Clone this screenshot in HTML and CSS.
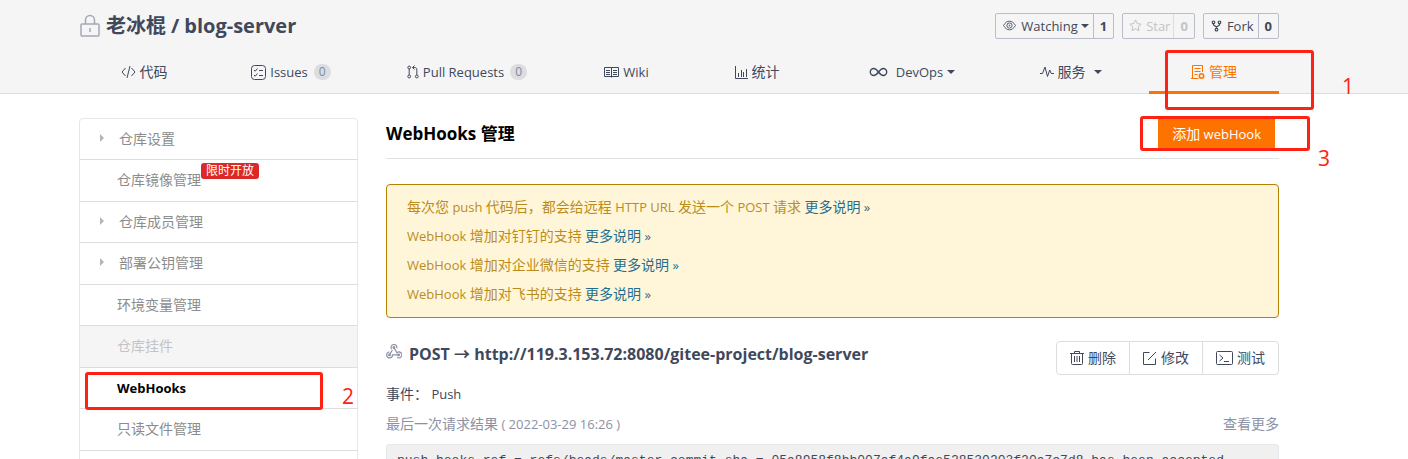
FILE: index.html
```
<!DOCTYPE html>
<html lang="zh-CN">
<head>
  <meta charset="utf-8">
  <title>WebHooks 管理</title>
  <link rel="stylesheet" href="styles.css">
</head>
<body>

<header class="project-header">
  <div class="container">
    <div class="title-row">
      <h1 class="project-title">
        <svg class="lock" width="22" height="24" viewBox="0 0 22 24" fill="none" stroke="#a3a8b8" stroke-width="1.5"><rect x="2" y="10" width="18" height="12" rx="1"/><path d="M6.500 10V6a4.500 4.500 0 0 1 9 0v4M11 14v4"/></svg>
        <a href="#">老冰棍</a> <span>/</span> <a href="#">blog-server</a>
      </h1>
      <div class="actions">
        <div class="action">
          <button class="action-main">
            <svg width="13" height="11" viewBox="0 0 13 11" fill="none" stroke="#596072"><path d="M.5 5.500C2.500 2.300 4.300 1.200 6.500 1.200s4 1.100 6 4.300c-2 3.200-3.800 4.300-6 4.300S2.500 8.700.5 5.500z"/><circle cx="6.500" cy="5.500" r="2.600"/><circle cx="6.500" cy="5.500" r=".5"/></svg>
            <span>Watching</span><i class="caret"></i>
          </button>
          <a class="action-count" href="#">1</a>
        </div>
        <div class="action disabled">
          <button class="action-main" disabled>
            <svg width="13" height="13" viewBox="0 0 13 13" fill="none" stroke="#c3c3c7"><path d="M6.500 1l1.700 3.600 3.900.5-2.900 2.700.8 3.900-3.500-1.900L3 11.700l.8-3.900L.9 5.100l3.900-.5z"/></svg>
            <span>Star</span>
          </button>
          <a class="action-count" href="#">0</a>
        </div>
        <div class="action">
          <button class="action-main">
            <svg width="11" height="12" viewBox="0 0 11 12" fill="none" stroke="#40485b" stroke-width="1.200"><circle cx="2.500" cy="2.300" r="1.300"/><circle cx="8.500" cy="2.300" r="1.300"/><circle cx="5.500" cy="9.700" r="1.300"/><path d="M2.500 3.600V5l3 2 3-2V3.600M5.500 7v1.400"/></svg>
            <span>Fork</span>
          </button>
          <a class="action-count" href="#">0</a>
        </div>
      </div>
    </div>

    <nav class="tabs">
      <a class="tab" href="#">
        <svg width="15" height="14" viewBox="0 0 15 14" fill="none" stroke="#40485b"><path d="M4.500 3L1 7l3.500 4M10.500 3L14 7l-3.500 4M9 1L6 13"/></svg>
        <span class="cjk">代码</span>
      </a>
      <a class="tab" href="#">
        <svg width="15" height="15" viewBox="0 0 15 15" fill="none" stroke="#40485b"><rect x=".5" y=".5" width="14" height="14" rx="3"/><path d="M3 5l1.200 1.200L6.500 3.500M3 10l1.200 1.200L6.500 8.500M8 5.500h4M8 10.500h4"/></svg>
        Issues <span class="badge">0</span>
      </a>
      <a class="tab" href="#">
        <svg width="12" height="14" viewBox="0 0 12 14" fill="none" stroke="#40485b"><circle cx="2.200" cy="2.500" r="1.400"/><circle cx="2.200" cy="11.500" r="1.400"/><circle cx="9.800" cy="11.500" r="1.400"/><path d="M2.200 4v6M9.800 10V4.500c0-1.300-.7-2-2-2H5.500M7.500.5l-2 2 2 2"/></svg>
        Pull Requests <span class="badge">0</span>
      </a>
      <a class="tab" href="#">
        <svg width="15" height="12" viewBox="0 0 15 12" fill="none" stroke="#40485b"><path d="M.5 1.500h14v9H.5zM7.500 1.500v10M2 4.500h4M2 6.500h4M2 8.500h4M9 4.500h4M9 6.500h4M9 8.500h4"/></svg>
        Wiki
      </a>
      <a class="tab" href="#">
        <svg width="13" height="13" viewBox="0 0 13 13" fill="none" stroke="#40485b"><path d="M.5 0v12.500H13M3.500 11V7M6.500 11V4M8.500 11V6M11.500 11V3"/></svg>
        <span class="cjk">统计</span>
      </a>
      <a class="tab" href="#">
        <svg width="19" height="10" viewBox="0 0 19 10" fill="none" stroke="#40485b" stroke-width="1.400"><path d="M9.500 5C8 3 6.800 1.500 4.800 1.500a3.500 3.500 0 0 0 0 7C6.800 8.500 8 7 9.500 5s2.700-3.500 4.700-3.500a3.500 3.500 0 0 1 0 7C12.200 8.500 11 7 9.500 5z"/></svg>
        <span class="devops">DevOps</span><i class="caret"></i>
      </a>
      <a class="tab" href="#">
        <svg width="14" height="12" viewBox="0 0 14 12" fill="none" stroke="#40485b"><path d="M0 7.500h2.500L5 1l2.500 9.500L9.700 4l1.500 3.500H14"/></svg>
        <span class="cjk">服务</span><i class="caret wide"></i>
      </a>
      <a class="tab active" href="#">
        <svg width="14" height="15" viewBox="0 0 14 15" fill="none" stroke="#fe7300"><path d="M7.500 13.500h-6V.5h10V7M0 13.500h7M3.500 3.500h6M3.500 6.500h6M3.500 9.500h3"/><circle cx="10.500" cy="11" r="2.200" stroke-width="1.500"/></svg>
        <span class="cjk">管理</span>
      </a>
    </nav>
  </div>
</header>

<div class="container page">
  <aside class="sidebar">
    <a class="menu-item parent" href="#">仓库设置</a>
    <a class="menu-item" href="#">仓库镜像管理<span class="hot">限时开放</span></a>
    <a class="menu-item parent" href="#">仓库成员管理</a>
    <a class="menu-item parent" href="#">部署公钥管理</a>
    <a class="menu-item" href="#">环境变量管理</a>
    <a class="menu-item muted" href="#">仓库挂件</a>
    <a class="menu-item current" href="#">WebHooks</a>
    <a class="menu-item" href="#">只读文件管理</a>
  </aside>

  <main class="content">
    <div class="content-head">
      <h2>WebHooks 管理</h2>
      <button class="add-btn"><span class="cjk">添加</span> webHook</button>
    </div>

    <div class="notice">
      <p><span class="cjk">每次您</span> push <span class="cjk">代码后，都会给远程</span> HTTP URL <span class="cjk">发送一个</span> POST <span class="cjk">请求</span> <a href="#"><span class="cjk">更多说明</span> »</a></p>
      <p>WebHook <span class="cjk">增加对钉钉的支持</span> <a href="#"><span class="cjk">更多说明</span> »</a></p>
      <p>WebHook <span class="cjk">增加对企业微信的支持</span> <a href="#"><span class="cjk">更多说明</span> »</a></p>
      <p>WebHook <span class="cjk">增加对飞书的支持</span> <a href="#"><span class="cjk">更多说明</span> »</a></p>
    </div>

    <section class="hook">
      <div class="hook-head">
        <h3>
          <svg width="16" height="15" viewBox="0 0 16 15" fill="none" stroke="#8c92a4" stroke-width="1.200"><path d="M5.700 5.200A2.900 2.900 0 1 1 10.700 4.300M7.900 3.500l3 5.300a2.900 2.900 0 1 1 .2 4.300M12.700 10.900H6.500a2.900 2.900 0 1 1-3-2.900M3.500 10.900L6.400 6"/><circle cx="7.900" cy="3.500" r=".8"/><circle cx="3.500" cy="10.900" r=".8"/><circle cx="12.700" cy="10.900" r=".8"/></svg>
          <span>POST → http://119.3.153.72:8080/gitee-project/blog-server</span>
        </h3>
        <div class="btn-group">
          <button>
            <svg width="14" height="14" viewBox="0 0 14 14" fill="none" stroke="#40485b"><path d="M0 2.500h14M4.500 2V.5h5V2M1.500 2.500v10q0 1 1 1h9q1 0 1-1v-10M4.500 5v6M7 5v6M9.500 5v6"/></svg>
            删除
          </button>
          <button>
            <svg width="14" height="14" viewBox="0 0 14 14" fill="none" stroke="#40485b"><path d="M6.500 1.500h-6v12h12v-6M5 9l8-8"/></svg>
            修改
          </button>
          <button>
            <svg width="17" height="14" viewBox="0 0 17 14" fill="none" stroke="#40485b"><rect x=".5" y=".5" width="16" height="13" rx="1"/><path d="M3.500 4l3.500 3-3.500 3M8 10.500h5"/></svg>
            测试
          </button>
        </div>
      </div>
      <p class="events"><span class="cjk">事件：</span> Push</p>
      <div class="last-result">
        <span><span class="cjk">最后一次请求结果</span> ( 2022-03-29 16:26 )</span>
        <a href="#">查看更多</a>
      </div>
      <pre class="result">push_hooks ref = refs/heads/master commit_sha = 05a8958f8bb007af4a9fae528530203f20a7c7d8 has been accepted</pre>
    </section>
  </main>
</div>

<!-- step marks -->
<div class="mark mark-tab"></div>
<div class="mark mark-menu"></div>
<div class="mark mark-add"></div>
<span class="step step-1">1</span>
<span class="step step-2">2</span>
<span class="step step-3">3</span>

</body>
</html>
```

FILE: styles.css
```
* {
  box-sizing: border-box;
}

body {
  margin: 0;
  font-family: "Open Sans", "Noto Sans CJK SC", sans-serif;
  font-size: 13px;
  line-height: 20px;
  color: #40485b;
  background: #fff;
}

a {
  color: inherit;
  text-decoration: none;
}

button {
  font: inherit;
  color: inherit;
  cursor: pointer;
}

h1, h2, h3, p {
  margin: 0;
}

svg {
  flex: none;
}

.cjk {
  font-size: 14px;
  line-height: 1;
}

.container {
  max-width: 1250px;
  margin: 0 auto;
  padding-right: 50px;
}

.project-header {
  background: #f5f5f5;
  border-bottom: 1px solid #dcdddf;
}

.title-row {
  display: flex;
  justify-content: space-between;
  align-items: center;
  height: 51px;
}

.project-title {
  display: flex;
  align-items: center;
  gap: 5px;
  font-size: 20px;
  line-height: 28px;
}

.actions {
  display: flex;
  gap: 8px;
}

.action {
  display: flex;
  height: 26px;
  border: 1px solid #babdcb;
  border-radius: 2px;
}

.action-main {
  display: flex;
  align-items: center;
  gap: 5px;
  padding: 0 4px 0 7px;
  border: 0;
  background: none;
}

.action-count {
  padding: 0 6px;
  border-left: 1px solid #babdcb;
  font-weight: bold;
  line-height: 24px;
}

.disabled,
.disabled .action-main {
  color: #c3c3c7;
}

.disabled .action-main {
  gap: 4px;
  padding: 0 3px 0 6px;
}

.disabled .action-count {
  border-color: #dcdddf;
}

.caret {
  border: 4px solid transparent;
  border-top: 4px solid #40485b;
  border-bottom: 0;
}

.action .caret {
  margin-left: -2px;
}

.tabs {
  display: grid;
  grid-template-columns: 130fr 164fr 188fr 131fr 130fr 180fr 147fr 130fr;
  height: 42px;
}

.tab {
  display: flex;
  align-items: center;
  justify-content: center;
  gap: 4px;
}

.tab.active {
  margin-bottom: -1px;
  padding-top: 2px;
  border-bottom: 3px solid #fe7300;
  color: #fe7300;
}

.badge {
  min-width: 17px;
  margin-left: 2px;
  border-radius: 8px;
  background: #dcdddf;
  color: #8089a4;
  font-size: 12px;
  line-height: 16px;
  text-align: center;
}

.devops {
  margin-left: 4px;
}

.caret.wide {
  margin: 0 10px 0 4px;
}

.page {
  display: flex;
  align-items: flex-start;
  gap: 28px;
  padding-top: 24px;
}

.sidebar {
  flex: 0 0 279px;
  padding-bottom: 42px;
  border: 1px solid #e3e7ec;
  border-radius: 4px;
  font-size: 14px;
}

.menu-item {
  display: flex;
  padding: 10px 0 11px 37px;
  border-bottom: 1px solid #dcdddf;
  color: #8c8c8c;
}

.menu-item:nth-child(odd) {
  padding-bottom: 10px;
}

.menu-item.parent {
  padding-left: 20px;
}

.parent::before {
  content: "";
  align-self: center;
  margin: 0 15px 2px 0;
  border: 4px solid transparent;
  border-left: 4px solid #b5b5b5;
  border-right: 0;
}

.menu-item.muted {
  background: #f5f5f5;
  color: #c3c3c7;
}

.menu-item.current {
  color: #000;
  font-size: 13px;
  font-weight: bold;
}

.hot {
  align-self: flex-start;
  margin-top: -7px;
  padding: 0 5px;
  border-radius: 3px;
  background: #db2828;
  color: #fff;
  font-size: 12px;
  line-height: 16px;
}

.content {
  flex: 1;
  min-width: 0;
}

.content-head {
  display: flex;
  justify-content: space-between;
  align-items: center;
  height: 41px;
  padding-bottom: 8px;
  border-bottom: 1px solid #e3e3e5;
}

.content-head h2 {
  color: #000;
  font-size: 17px;
}

.add-btn {
  height: 31px;
  margin-right: 4px;
  padding: 0 14px;
  border: 0;
  background: #fe7300;
  color: #fff;
}

.notice {
  margin-top: 25px;
  padding: 8px 20px;
  border: 1px solid #b58105;
  border-radius: 4px;
  background: #fff6d9;
  color: #bb8c1b;
  line-height: 29px;
}

.notice a {
  color: #1f6f8f;
}

.hook {
  margin-top: 23px;
}

.hook-head {
  display: flex;
  justify-content: space-between;
  align-items: center;
}

.hook h3 {
  display: flex;
  gap: 7px;
  padding-bottom: 8px;
  font-size: 16px;
}

.btn-group {
  display: flex;
  border: 1px solid #dcdddf;
  border-radius: 4px;
}

.btn-group button {
  display: flex;
  align-items: center;
  gap: 4px;
  height: 32px;
  padding: 0 13px;
  border: 0;
  background: none;
  font-size: 14px;
}

.btn-group button + button {
  border-left: 1px solid #dcdddf;
}

.events {
  margin-top: 9px;
}

.last-result {
  display: flex;
  justify-content: space-between;
  margin-top: 10px;
  color: #8c92a4;
}

.last-result a {
  font-size: 14px;
}

.result {
  margin: 10px 0 0;
  padding: 6px 10px 12px;
  border: 1px solid #e3e9ed;
  border-radius: 3px;
  background: #f0f0f0;
  font-family: "Liberation Mono", monospace;
  font-size: 13px;
  line-height: 20px;
  overflow: hidden;
}

/* step marks lie over the page */
.mark {
  position: absolute;
  border: 3px solid #ff2213;
  border-radius: 3px;
}

.mark-tab {
  left: 1165px;
  top: 50px;
  width: 149px;
  height: 60px;
}

.mark-menu {
  left: 85px;
  top: 372px;
  width: 238px;
  height: 38px;
}

.mark-add {
  left: 1140px;
  top: 116px;
  width: 170px;
  height: 35px;
}

.step {
  position: absolute;
  color: #ff2213;
  font-size: 21px;
  line-height: 24px;
}

.step-1 {
  left: 1342px;
  top: 74px;
}

.step-2 {
  left: 342px;
  top: 384px;
}

.step-3 {
  left: 1318px;
  top: 146px;
}
```
